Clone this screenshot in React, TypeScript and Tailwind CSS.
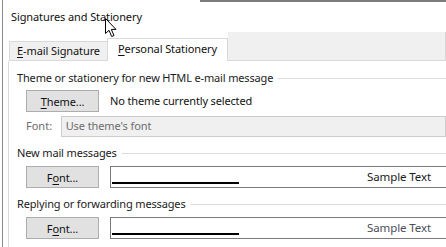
import React from 'react'

const FONT = { fontFamily: '"Noto Sans", "Open Sans", sans-serif' }

// 그룹 제목 + 오른쪽 구분선
function GroupHeader({ title, className }: { title: string; className: string }) {
  return (
    <div className={`flex items-center h-[16px] ml-[8px] ${className}`}>
      <span className="whitespace-nowrap text-[11px] tracking-[-0.15px] text-[#1b1b1b]">{title}</span>
      <div className="flex-1 h-px bg-[#dcdcdc] ml-[5px]" />
    </div>
  )
}

function WinButton({ before, key1, after }: { before: string; key1: string; after: string }) {
  return (
    <button
      type="button"
      className="w-[73px] h-[22px] shrink-0 border border-[#adadad] bg-[#e1e1e1] text-[11px] tracking-[-0.1px] text-[#111] leading-none flex items-center justify-center"
    >
      {before}
      <span className="underline underline-offset-2">{key1}</span>
      {after}
    </button>
  )
}

function SampleBox({ textColor }: { textColor: string }) {
  return (
    <div className="relative ml-[11px] w-[345px] h-[22px] shrink-0 border border-[#7a7a7a] bg-white flex items-center justify-end pr-[23px]">
      <div className="absolute left-[1px] top-[15px] w-[127px] h-[1.5px] bg-black" />
      <span className={`text-[11.5px] tracking-[-0.1px] ${textColor}`}>Sample Text</span>
    </div>
  )
}

export default function App() {
  return (
    <div className="relative w-[446px] h-[247px] overflow-hidden bg-white" style={FONT}>
      {/* ---------- top frame line ---------- */}
      <div className="absolute top-0 left-[200px] right-0 h-[2px] bg-[#7d7d7d]" />

      <div className="h-full ml-[2px] border-l border-[#8a8a8a] flex flex-col">
        {/* ---------- Title ---------- */}
        <div className="h-[32px] pl-[8px] pt-[9px] text-[11px] tracking-[-0.1px] text-[#111] leading-[16px] whitespace-nowrap">
          Signatures and Stationery
        </div>

        {/* ---------- Tabs ---------- */}
        <div className="h-[29px] flex items-end">
          <div className="w-[6px] h-full" />
          <div className="w-[99px] h-[20px] border border-[#d9d9d9] bg-[#f0f0f0] text-[11px] tracking-[-0.1px] text-[#111] flex items-center justify-center whitespace-nowrap">
            <span className="underline underline-offset-2">E</span>-mail Signature
          </div>
          <div className="w-[121px] h-[23px] -ml-px border border-b-0 border-[#d9d9d9] bg-white text-[11px] tracking-[-0.1px] text-[#111] flex items-center justify-center whitespace-nowrap pb-[2px]">
            <span className="underline underline-offset-2">P</span>ersonal Stationery
          </div>
          <div className="flex-1 h-full bg-[#f0f0f0] border-b border-r border-[#d9d9d9]" />
        </div>

        {/* ---------- Panel ---------- */}
        <div className="flex-1 ml-[5px] border-l border-[#d9d9d9] flex flex-col">
          <GroupHeader title="Theme or stationery for new HTML e-mail message" className="mt-[9px]" />
          <div className="mt-[4px] ml-[17px] flex items-center">
            <WinButton before="" key1="T" after="heme..." />
            <span className="ml-[11px] text-[11px] tracking-[-0.15px] text-[#111] whitespace-nowrap">No theme currently selected</span>
          </div>
          <div className="mt-[4px] ml-[17px] flex items-center">
            <span className="w-[36px] text-[11px] text-[#6d6d6d]">Font:</span>
            <div className="w-[400px] h-[21px] border border-[#cccccc] bg-[#f0f0f0] pl-[4px] flex items-center text-[11px] tracking-[-0.1px] text-[#6d6d6d] whitespace-nowrap">
              Use theme's font
            </div>
          </div>

          <GroupHeader title="New mail messages" className="mt-[8px]" />
          <div className="mt-[5px] ml-[17px] flex items-center">
            <WinButton before="F" key1="o" after="nt..." />
            <SampleBox textColor="text-[#1a1a1a]" />
          </div>

          <GroupHeader title="Replying or forwarding messages" className="mt-[8px]" />
          <div className="mt-[5px] ml-[17px] flex items-center">
            <WinButton before="F" key1="o" after="nt..." />
            <SampleBox textColor="text-[#4b4f5a]" />
          </div>
        </div>
      </div>

      {/* ---------- mouse cursor ---------- */}
      <svg className="absolute left-[105px] top-[18px]" width="13" height="20" viewBox="0 0 13 20">
        <path
          d="M0.5 0.5 L0.5 15.5 L4 12.3 L6.7 18.5 L9 17.5 L6.3 11.4 L11 11.4 Z"
          fill="white"
          stroke="black"
          strokeWidth="1"
          strokeLinejoin="miter"
        />
      </svg>
    </div>
  )
}
